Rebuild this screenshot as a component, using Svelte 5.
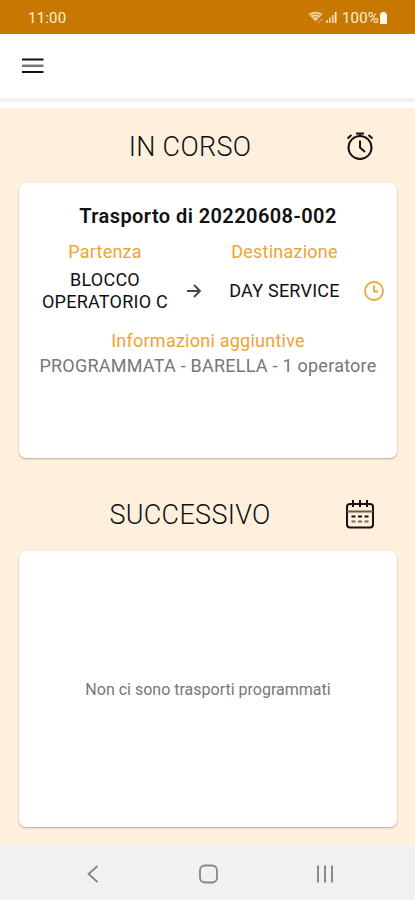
<script>
	let time = "11:00"
	let battery = "100%"

	let current = {
		code: "20220608-002",
		from: "BLOCCO OPERATORIO C",
		to: "DAY SERVICE",
		info: "PROGRAMMATA - BARELLA - 1 operatore"
	}
	let next = null;
</script>

<style>
	:global(body) {
		margin: 0;
		background: #fff0de;
	}
	.app {
		display: flex;
		flex-direction: column;
		height: 900px;
		overflow: hidden;
		font-family: Roboto, "Liberation Sans", sans-serif;
		color: #111;
	}
	svg {
		display: block;
	}
	.status {
		display: flex;
		justify-content: space-between;
		box-sizing: border-box;
		height: 34px;
		padding: 1px 27px 0 28px;
		align-items: center;
		background: #c87800;
		color: #fff0d8;
		font-size: 15px;
		letter-spacing: 0.2px;
		line-height: 34px;
	}
	.status__right {
		display: flex;
		align-items: center;
	}
	.status__right span {
		margin: 0 0 0 3px;
	}
	.header {
		box-sizing: border-box;
		height: 68px;
		padding: 20px 21px;
		background: #fff;
		border-bottom: 4px solid #f1f1f2;
	}
	.menu {
		display: block;
		padding: 0;
		border: 0;
		background: none;
	}
	.content {
		flex: 1;
		border-top: 6px solid #fff;
		background: #fff0de;
	}
	.heading {
		display: grid;
		grid-template-columns: 1fr 30px;
		align-items: center;
		height: 75px;
		padding: 0 40px 0 35px;
	}
	.heading--next {
		margin-top: 18px;
	}
	h2 {
		margin: 0;
		padding-top: 2px;
		font-size: 27px;
		font-weight: 350;
		letter-spacing: 0.3px;
		line-height: 32px;
		text-align: center;
	}
	.card {
		box-sizing: border-box;
		height: 275px;
		margin: 0 18px 0 19px;
		border-radius: 7px;
		background: #fff;
		box-shadow: 0 1px 2px rgba(0, 0, 0, 0.3);
		text-align: center;
	}
	.card--empty {
		display: flex;
		height: 276px;
		align-items: center;
		justify-content: center;
		color: #777;
		font-size: 16px;
	}
	h3 {
		margin: 0;
		padding-top: 21px;
		font-size: 20px;
		font-weight: 600;
		letter-spacing: 0.42px;
		line-height: 24px;
	}
	.route {
		display: grid;
		grid-template-columns: 144px 34px 147px 32px;
		grid-template-rows: 24px 44px;
		padding: 12px 7px 0 14px;
		align-items: center;
		justify-items: center;
		font-size: 18px;
		letter-spacing: 0.24px;
		line-height: 22px;
	}
	.place {
		padding-top: 9px;
	}
	.label {
		color: #eda431;
	}
	.info {
		padding-top: 20px;
		font-size: 18px;
		letter-spacing: 0.24px;
		line-height: 25px;
	}
	.info__text {
		color: #777;
	}
	.nav {
		display: flex;
		justify-content: center;
		align-items: center;
		gap: 94px;
		height: 55px;
		padding: 2px 0 0 2px;
		box-sizing: border-box;
		background: #f1f1f1;
	}
</style>

<div class="app">
	<div class="status">
		<div class="time">{ time }</div>
		<div class="status__right">
			<svg width="31" height="13" viewBox="-2 0 31 13" fill="#fff0d8">
				<path d="M-1.500 3Q5.500-1.500 12.500 3L5.500 10.500Z" opacity=".75" />
				<path d="M.5 4.200Q5.500 1.500 10.500 4.200M3 6.500Q5.500 5 8 6.500" fill="none" stroke="#c87800" stroke-width=".8" />
				<path d="M10 9.500l1.500-2 1.500 2zM7.500 10.500h3l-1.500 1.500z" opacity=".6" />
				<path d="M16 9h2v3h-2zM18.900 6.500h2v5.500h-2zM21.800 4h2v8h-2z" opacity=".65" />
				<path d="M24.700 1h1.800v11h-1.800z" />
			</svg>
			<span>{ battery }</span>
			<svg width="9" height="12" viewBox="0 0 9 12" fill="#fff7e9">
				<path d="M2.500 0h4v1.500h1.500v10.500h-7v-10.500h1.500z" />
			</svg>
		</div>
	</div>

	<div class="header">
		<button class="menu" aria-label="Menu">
			<svg width="24" height="24" viewBox="0 0 24 24">
				<path d="M1 5.500h21.500M1 18h21.500" stroke="#111" stroke-width="2.200" />
				<path d="M1 11.800h21.500" stroke="#777" stroke-width="2.500" />
			</svg>
		</button>
	</div>

	<div class="content">
		<div class="heading">
			<h2>IN CORSO</h2>
			<svg width="30" height="30" viewBox="0 0 30 30" fill="none" stroke="#18120f" stroke-width="2">
				<circle cx="15" cy="16.500" r="11.500" />
				<path d="M15 9.500v7l5 4.500M11 2.500h8M15 2.500v3" />
				<path d="M2.500 7.500l4-3.500M23.500 4l4 3.500" />
			</svg>
		</div>
		<div class="card">
			<h3>Trasporto di { current.code }</h3>
			<div class="route">
				<div class="label">Partenza</div>
				<div></div>
				<div class="label">Destinazione</div>
				<div></div>
				<div class="place">{ current.from }</div>
				<svg class="place" width="16" height="16" viewBox="0 0 16 16" fill="none" stroke="#444" stroke-width="1.800">
					<path d="M1 8h13M8 2l6 6-6 6" />
				</svg>
				<div class="place">{ current.to }</div>
				<svg class="place" width="20" height="20" viewBox="0 0 20 20" fill="none" stroke="#e9a73d" stroke-width="1.800">
					<circle cx="10" cy="10" r="9" />
					<path d="M10 4.500v6h4" />
				</svg>
			</div>
			<div class="info">
				<div class="label">Informazioni aggiuntive</div>
				<div class="info__text">{ current.info }</div>
			</div>
		</div>

		<div class="heading heading--next">
			<h2>SUCCESSIVO</h2>
			<svg width="30" height="30" viewBox="0 0 30 30" fill="none" stroke="#18120f" stroke-width="2">
				<rect x="2" y="5" width="26" height="23.500" rx="3" />
				<path d="M8 1v7M15 1v7M22 1v7" />
				<path d="M2 12.500h26" stroke="#665d54" />
				<path d="M6.500 17.500h4M13 17.500h4M19.500 17.500h4" />
				<path d="M6.500 22.500h4M13 22.500h4M19.500 22.500h4" stroke="#70675e" />
			</svg>
		</div>
		<div class="card card--empty">
			{#if next}
				{ next.code }
			{:else}
				Non ci sono trasporti programmati
			{/if}
		</div>
	</div>

	<div class="nav">
		<svg width="22" height="22" viewBox="0 0 22 22" fill="none" stroke="#858585" stroke-width="1.800">
			<path d="M15.500 3l-9 8 9 8" />
		</svg>
		<svg width="22" height="22" viewBox="0 0 22 22" fill="none" stroke="#858585" stroke-width="1.800">
			<rect x="2" y="2.500" width="17" height="17" rx="5" />
		</svg>
		<svg width="22" height="22" viewBox="0 0 22 22" stroke="#858585" stroke-width="1.900">
			<path d="M4 2.500v17M11 2.500v17M18 2.500v17" />
		</svg>
	</div>
</div>
